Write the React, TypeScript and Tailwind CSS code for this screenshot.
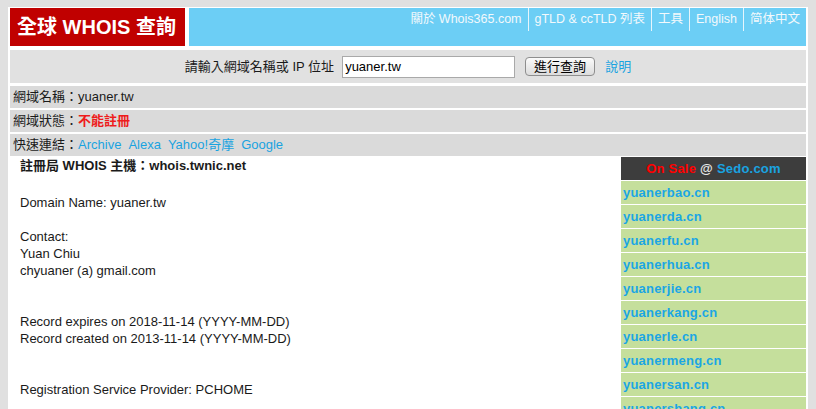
const font = { fontFamily: '"Liberation Sans", Arial, "Noto Sans CJK TC", sans-serif' };

const navLinks = ["關於 Whois365.com", "gTLD & ccTLD 列表", "工具", "English", "简体中文"];

const saleDomains = [
  "yuanerbao.cn",
  "yuanerda.cn",
  "yuanerfu.cn",
  "yuanerhua.cn",
  "yuanerjie.cn",
  "yuanerkang.cn",
  "yuanerle.cn",
  "yuanermeng.cn",
  "yuanersan.cn",
  "yuanershang.cn",
  "yuanershi.cn",
];

const whoisText = `Domain Name: yuaner.tw

Contact:
Yuan Chiu
chyuaner (a) gmail.com


Record expires on 2018-11-14 (YYYY-MM-DD)
Record created on 2013-11-14 (YYYY-MM-DD)


Registration Service Provider: PCHOME`;

export default function App() {
  return (
    <div style={font} className="h-[409px] overflow-hidden bg-[#e0e0e0] pt-[7px] text-[13px] text-[#1a1a1a]">
      <div className="mx-2 h-[600px] bg-white px-[2px] pt-px">
        {/* header */}
        <div className="flex h-[38px] gap-1">
          <div className="flex w-[175px] items-center bg-[#c00000] pl-[7px] text-[20px] font-bold text-white">
            全球 WHOIS 查詢
          </div>
          <div className="flex flex-1 justify-end bg-[#6ccef5] text-[12.5px]">
            {navLinks.map((l, i) => (
              <a
                key={l}
                className={`flex h-[23px] items-center px-[6px] text-[#f3f9fc] ${i > 0 ? "border-l border-[#e6f5fc]" : ""}`}
              >
                {l}
              </a>
            ))}
          </div>
        </div>

        {/* search */}
        <div className="mt-1 flex h-[33px] items-center justify-center bg-[#e1e1e1]">
          <span>請輸入網域名稱或 IP 位址</span>
          <input
            defaultValue="yuaner.tw"
            className="ml-2 h-[22px] w-[173px] border border-[#a9a9a9] bg-white px-[2px] text-[13px] text-black"
            style={font}
          />
          <button
            className="ml-[10px] h-[19px] w-[70px] rounded-[4px] border border-[#8e8e8e] bg-gradient-to-b from-[#fbfbfb] to-[#dcdcdc] text-[13px] leading-none text-black"
            style={font}
          >
            進行查詢
          </button>
          <a className="ml-[10px] text-[#19a3e0]">說明</a>
        </div>

        {/* info rows */}
        <div className="mt-[3px] flex flex-col gap-[2px]">
          <div className="flex h-[22px] items-center bg-[#dadada] pl-[3px]">網域名稱：yuaner.tw</div>
          <div className="flex h-[22px] items-center bg-[#dadada] pl-[3px]">
            網域狀態：<span className="font-bold text-[#ee1c1c]">不能註冊</span>
          </div>
          <div className="flex h-[22px] items-center gap-[7px] bg-[#dadada] pl-[3px]">
            <span className="-mr-[7px]">快速連結：</span>
            <a className="text-[#19a3e0]">Archive</a>
            <a className="text-[#19a3e0]">Alexa</a>
            <a className="text-[#19a3e0]">Yahoo!奇摩</a>
            <a className="text-[#19a3e0]">Google</a>
          </div>
        </div>

        {/* body */}
        <div className="mt-px flex">
          <div className="flex-1 pl-[10px] leading-[17px]">
            <div className="font-bold">註冊局 WHOIS 主機：whois.twnic.net</div>
            <div className="mt-[20px] whitespace-pre-line">{whoisText}</div>
          </div>
          <div className="flex w-[185px] flex-col gap-px text-[13px] font-bold tracking-[0.2px]">
            <div className="flex h-[23px] items-center justify-center bg-[#3d3d3d]">
              <span className="text-[#ff0000]">On Sale</span>
              <span className="mx-[4px] text-[#e8e8e8]">@</span>
              <span className="text-[#19a3e0]">Sedo.com</span>
            </div>
            {saleDomains.map((d) => (
              <div key={d} className="flex h-[23px] items-center bg-[#c5df9c] pl-[2px] text-[#1ba6e4]">
                {d}
              </div>
            ))}
          </div>
        </div>
      </div>
    </div>
  );
}
